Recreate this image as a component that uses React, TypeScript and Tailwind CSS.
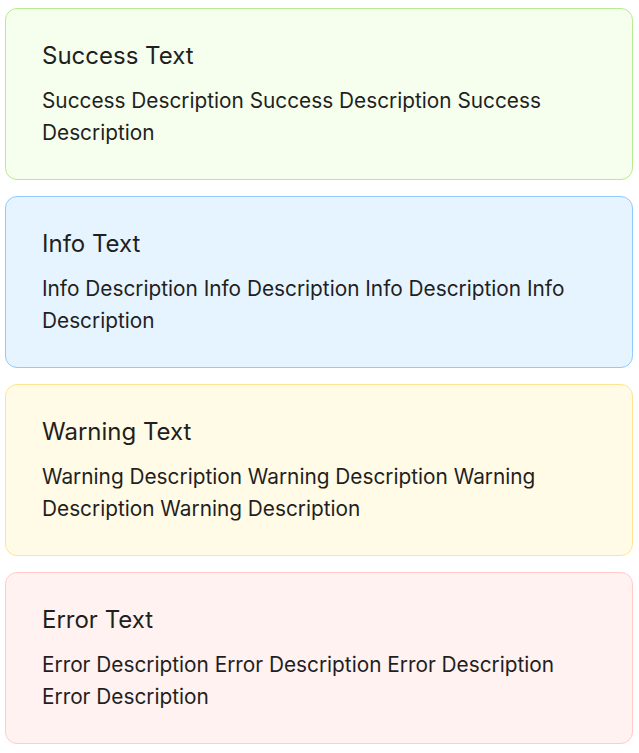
const alerts = [
  {
    title: 'Success Text',
    desc: 'Success Description Success Description Success Description',
    box: 'bg-[#f6ffed] border-[#b7eb8f]',
  },
  {
    title: 'Info Text',
    desc: 'Info Description Info Description Info Description Info Description',
    box: 'bg-[#e6f4ff] border-[#91caff]',
  },
  {
    title: 'Warning Text',
    desc: 'Warning Description Warning Description Warning Description Warning Description',
    box: 'bg-[#fffbe6] border-[#ffe58f]',
  },
  {
    title: 'Error Text',
    desc: 'Error Description Error Description Error Description Error Description',
    box: 'bg-[#fff2f0] border-[#ffccc7]',
  },
];

export default function App() {
  return (
    <div className="flex flex-col gap-4 pt-2 pl-[5px] font-['Inter',sans-serif] text-[#1f1f1f]">
      {alerts.map((a) => (
        <div key={a.title} className={`w-[628px] rounded-xl border px-9 py-[30px] ${a.box}`}>
          <div className="text-[24px] leading-[34px] mb-3">{a.title}</div>
          <div className="text-[20.8px] leading-[32px]">{a.desc}</div>
        </div>
      ))}
    </div>
  );
}
